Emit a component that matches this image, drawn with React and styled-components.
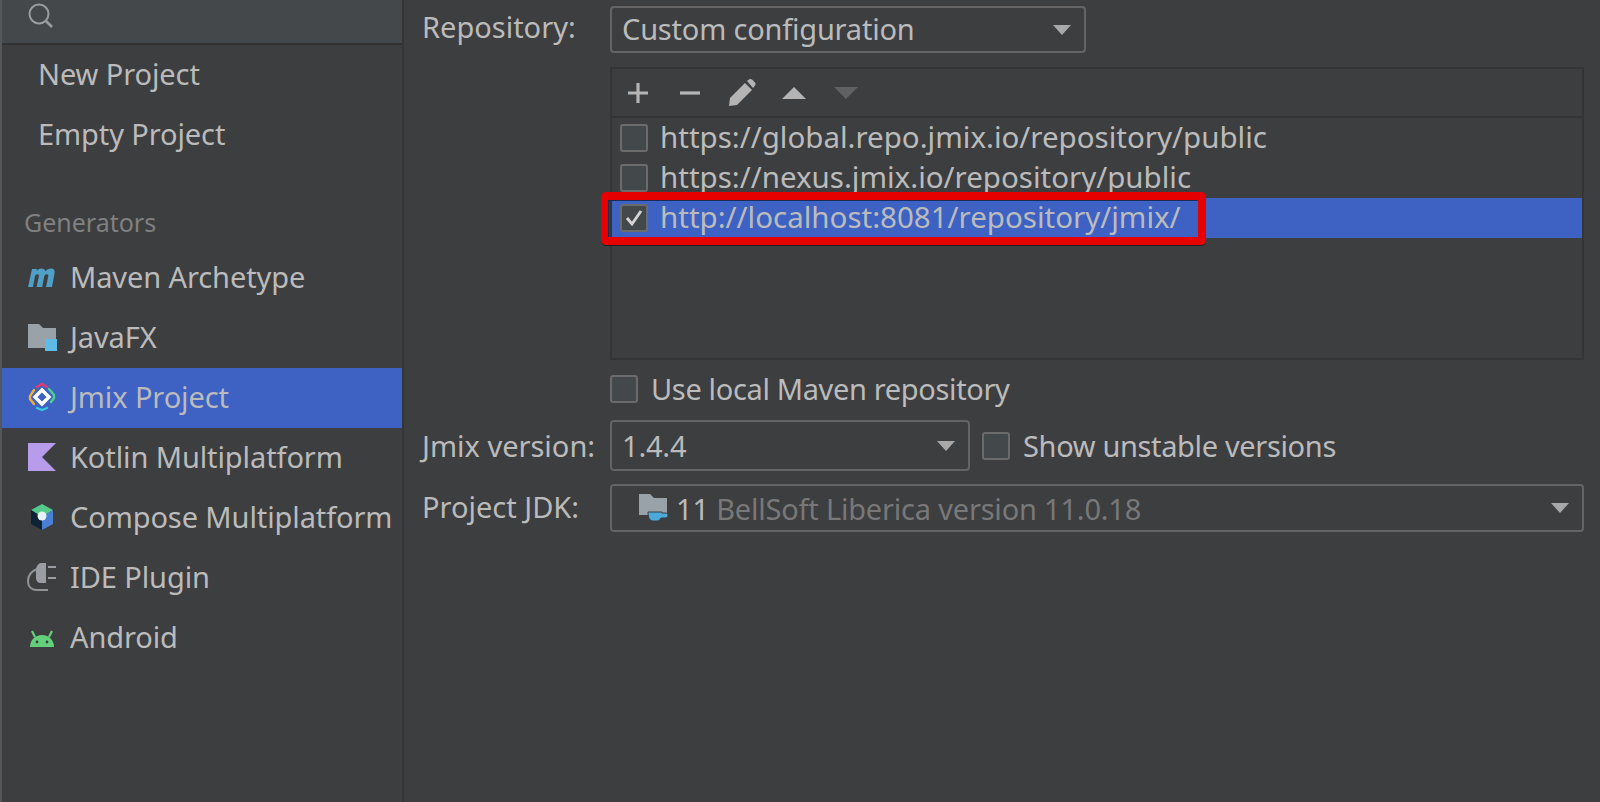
import React from 'react';
import styled, { createGlobalStyle } from 'styled-components';

const GlobalStyle = createGlobalStyle`
  html, body {
    margin: 0;
    height: 100%;
    background: #3d3e40;
  }
  #root {
    height: 100%;
  }
`;

const Page = styled.div`
  display: flex;
  height: 802px;
  overflow: hidden;
  background: #3d3e40;
  border-left: 2px solid #55585a;
  box-sizing: border-box;
  color: #bbbbbb;
  font-family: "Noto Sans", "Open Sans", sans-serif;
  font-size: 29px;
`;

const Sidebar = styled.aside`
  flex-shrink: 0;
  box-sizing: border-box;
  width: 402px;
  border-right: 2px solid #333537;
`;

const SearchBar = styled.div`
  display: flex;
  align-items: flex-start;
  height: 45px;
  padding: 3px 0 0 26px;
  box-sizing: border-box;
  background: #45484a;
  border-bottom: 2px solid #323232;
`;

const SideRow = styled.div`
  display: flex;
  align-items: center;
  gap: 13px;
  box-sizing: border-box;
  height: 60px;
  padding-bottom: 3px;
  padding-left: ${({ $inset }) => $inset || 25}px;
  background: ${({ $selected }) => ($selected ? '#3d62c3' : 'transparent')};
  letter-spacing: -0.1px;
  white-space: nowrap;
`;

const TopRows = styled.div`
  margin-bottom: 39px;
`;

const GroupTitle = styled.div`
  height: 44px;
  padding-left: 22px;
  font-size: 25px;
  line-height: 36px;
  color: #808080;
`;

const IconBox = styled.span`
  display: flex;
  flex-shrink: 0;
  width: 30px;
  height: 30px;
`;

const Main = styled.main`
  flex: 1;
  padding: 6px 16px 0 18px;
  min-width: 0;
`;

const FormRow = styled.div`
  display: grid;
  grid-template-columns: 188px 1fr;
  align-items: center;
  margin-bottom: ${({ $gap }) => $gap || 0}px;
`;

const Label = styled.label`
  white-space: nowrap;
  padding-bottom: ${({ $lift }) => $lift || 0}px;
`;

const Combo = styled.div`
  display: flex;
  align-items: center;
  justify-content: space-between;
  box-sizing: border-box;
  width: ${({ $width }) => ($width ? `${$width}px` : '100%')};
  height: ${({ $height }) => $height || 47}px;
  padding: 0 13px 0 10px;
  border: 2px solid #646464;
  border-radius: 4px;
  letter-spacing: -0.2px;
`;

const ComboValue = styled.span`
  display: flex;
  align-items: center;
  gap: 8px;
  margin-left: ${({ $inset }) => $inset || 0}px;
  padding-bottom: ${({ $lift }) => $lift || 0}px;
  white-space: nowrap;
`;

const Muted = styled.span`
  color: #787878;
`;

const Arrow = styled.span`
  width: 0;
  height: 0;
  border-left: 9px solid transparent;
  border-right: 9px solid transparent;
  border-top: 10px solid #a8a8a8;
`;

const Table = styled.div`
  box-sizing: border-box;
  height: 293px;
  border: 2px solid #333537;
`;

const Toolbar = styled.div`
  display: flex;
  align-items: center;
  height: 49px;
  border-bottom: 2px solid #333537;
  box-sizing: border-box;
`;

const ToolButton = styled.span`
  display: flex;
  align-items: center;
  justify-content: center;
  width: 52px;
  height: 100%;
`;

const RepoRow = styled.div`
  position: relative;
  display: flex;
  align-items: center;
  gap: 12px;
  box-sizing: border-box;
  height: 40px;
  padding-left: 8px;
  background: ${({ $selected }) => ($selected ? '#3d62c3' : 'transparent')};
  font-size: 29.5px;
  white-space: nowrap;
`;

const RepoUrl = styled.span`
  position: relative;
  top: -2px;
`;

const Checkbox = styled.span`
  display: flex;
  align-items: center;
  justify-content: center;
  flex-shrink: 0;
  box-sizing: border-box;
  width: 28px;
  height: 28px;
  background: #43494a;
  border: 2px solid #6b6b6b;
  border-radius: 3px;
`;

const CheckLine = styled.div`
  display: flex;
  align-items: center;
  gap: 13px;
  letter-spacing: -0.35px;
  white-space: nowrap;
`;

const VersionLine = styled.div`
  display: flex;
  align-items: center;
  gap: 12px;
`;

const Highlight = styled.div`
  position: absolute;
  left: -11px;
  top: -6px;
  width: 605px;
  height: 53px;
  box-sizing: border-box;
  border: 8px solid #e60000;
  border-left-width: 7px;
  border-radius: 5px;
  box-shadow: inset 1px 1px 0 #1c2b55, 0 1px 0 #1f1f1f;
  pointer-events: none;
`;

const SearchIcon = () => (
  <svg width="26" height="26" viewBox="0 0 26 26" fill="none" stroke="#9a9d9f" strokeWidth="2">
    <circle cx="11" cy="11" r="9.5" />
    <path d="M18 18l6 6" strokeWidth="2.6" />
  </svg>
);

const MavenIcon = () => (
  <svg width="32" height="30" viewBox="0 0 30 30">
    <path d="M1 25L5 7h5l-.4 2c1.600-1.600 3.200-2.400 5-2.400 2 0 3.200.9 3.700 2.600 1.700-1.700 3.500-2.600 5.400-2.600 3 0 4.400 1.900 3.800 5L25 25h-6l2.200-10.500c.3-1.500-.1-2.300-1.200-2.300-.9 0-1.800.5-2.600 1.300L15.200 25H9.600l2.200-10.500c.3-1.500-.1-2.300-1.200-2.300-.9 0-1.800.5-2.500 1.200L5.900 25z" fill="#4f9fc7" />
  </svg>
);

const FolderIcon = () => (
  <svg width="30" height="30" viewBox="0 0 30 30">
    <path d="M1 2h11l4 4h13v15H18v5H1z" fill="#9aa2a9" />
    <rect x="18" y="17" width="12" height="12" fill="#5dbbe6" />
  </svg>
);

const JmixIcon = () => (
  <svg width="30" height="30" viewBox="0 0 30 30" fill="none" strokeWidth="2.4" strokeLinecap="round">
    <path d="M10 5l5-3 5 3" stroke="#e23a6e" />
    <path d="M22 7l5 6v3l-3 4" stroke="#4fd08a" />
    <path d="M10 26l5 2 5-2" stroke="#38c6dc" />
    <path d="M7 8l-4 6v3l4 5" stroke="#f0b03c" />
    <path d="M15 8l7 7-7 7-7-7z" fill="#3d62c3" stroke="#ffffff" strokeWidth="3.4" strokeLinecap="butt" />
  </svg>
);

const KotlinIcon = () => (
  <svg width="30" height="30" viewBox="0 0 30 30">
    <path d="M1 1h28L15 15l14 14H1z" fill="#b79cec" />
  </svg>
);

const ComposeIcon = () => (
  <svg width="30" height="30" viewBox="0 0 30 30">
    <path d="M15 2l11 6-11 7-11-7z" fill="#55c98a" />
    <path d="M4 8l11 7v13L4 22z" fill="#0d2436" />
    <path d="M26 8L15 15v13l11-6z" fill="#4a80d4" />
    <circle cx="15" cy="14" r="4.500" fill="#e8f2f4" />
  </svg>
);

const PluginIcon = () => (
  <svg width="30" height="30" viewBox="0 0 30 30" fill="none">
    <path d="M10 7C5 9 1 12 1 19c0 6 4 9 9 9h11" stroke="#8f9396" strokeWidth="2" />
    <path d="M9 8c0-3 2-7 5-7h5v20h-5c-3 0-5-2-5-5z" fill="#9a9ea2" />
    <path d="M21 5h8M21 16h8" stroke="#9a9ea2" strokeWidth="2.200" />
  </svg>
);

const AndroidIcon = () => (
  <svg width="30" height="30" viewBox="0 0 30 30">
    <path d="M3 25c0-7 5-12 12-12s12 5 12 12z" fill="#63d07c" />
    <path d="M8 15L5 9M22 15l3-6" stroke="#63d07c" strokeWidth="2.200" />
    <circle cx="10" cy="20" r="1.400" fill="#3d3e40" />
    <circle cx="20" cy="20" r="1.400" fill="#3d3e40" />
  </svg>
);

const JdkIcon = () => (
  <svg width="30" height="30" viewBox="0 0 30 30">
    <path d="M1 1h11l4 4h13v17H1z" fill="#9aa2a9" />
    <path d="M10 19h14v1h3c2 0 3 1 3 2.500S29 25 27 25h-4c-1 2-2 3-4 3h-4c-3 0-5-3-5-9z" fill="#4ca9dc" stroke="#3d3e40" strokeWidth="1" />
  </svg>
);

const CheckMark = () => (
  <svg width="20" height="20" viewBox="0 0 20 20" fill="none" stroke="#d6d6d6" strokeWidth="2.800">
    <path d="M3 10l5 6 9-13" />
  </svg>
);

const PlusIcon = () => (
  <svg width="24" height="24" viewBox="0 0 24 24" stroke="#b4b4b4" strokeWidth="3.200">
    <path d="M12 2v20M2 12h20" />
  </svg>
);

const MinusIcon = () => (
  <svg width="24" height="24" viewBox="0 0 24 24" stroke="#b4b4b4" strokeWidth="3.200">
    <path d="M2 12h20" />
  </svg>
);

const PencilIcon = () => (
  <svg width="28" height="28" viewBox="0 0 28 28" fill="#b4b4b4">
    <path d="M1 27l1-8L17 4l7 7L9 26z" />
    <path d="M19 2l2-1.500c1-.7 2-.7 3 0l3 3c.7 1 .7 2 0 3L25 9z" />
  </svg>
);

const TriangleIcon = ({ down }) => (
  <svg width="26" height="14" viewBox="0 0 26 14" fill={down ? '#5f6163' : '#b4b4b4'}>
    <path d={down ? 'M1 1h24L13 13z' : 'M13 1l12 12H1z'} />
  </svg>
);

const generators = [
  { name: 'Maven Archetype', Icon: MavenIcon },
  { name: 'JavaFX', Icon: FolderIcon },
  { name: 'Jmix Project', Icon: JmixIcon, selected: true },
  { name: 'Kotlin Multiplatform', Icon: KotlinIcon },
  { name: 'Compose Multiplatform', Icon: ComposeIcon },
  { name: 'IDE Plugin', Icon: PluginIcon },
  { name: 'Android', Icon: AndroidIcon },
];

const App = () => (
  <Page>
    <GlobalStyle />
    <Sidebar>
      <SearchBar>
        <SearchIcon />
      </SearchBar>
      <TopRows>
        <SideRow $inset={36}>New Project</SideRow>
        <SideRow $inset={36}>Empty Project</SideRow>
      </TopRows>
      <GroupTitle>Generators</GroupTitle>
      {generators.map(({ name, Icon, selected }) => (
        <SideRow key={name} $selected={selected}>
          <IconBox>
            <Icon />
          </IconBox>
          {name}
        </SideRow>
      ))}
    </Sidebar>
    <Main>
      <FormRow $gap={14}>
        <Label $lift={6}>Repository:</Label>
        <Combo $width={476}>
          <ComboValue $lift={3}>Custom configuration</ComboValue>
          <Arrow />
        </Combo>
      </FormRow>
      <FormRow $gap={9}>
        <span />
        <Table>
          <Toolbar>
            <ToolButton><PlusIcon /></ToolButton>
            <ToolButton><MinusIcon /></ToolButton>
            <ToolButton><PencilIcon /></ToolButton>
            <ToolButton><TriangleIcon /></ToolButton>
            <ToolButton><TriangleIcon down /></ToolButton>
          </Toolbar>
          <RepoRow>
            <Checkbox />
            <RepoUrl>https://global.repo.jmix.io/repository/public</RepoUrl>
          </RepoRow>
          <RepoRow>
            <Checkbox />
            <RepoUrl>https://nexus.jmix.io/repository/public</RepoUrl>
          </RepoRow>
          <RepoRow $selected>
            <Checkbox>
              <CheckMark />
            </Checkbox>
            <RepoUrl>http://localhost:8081/repository/jmix/</RepoUrl>
            <Highlight />
          </RepoRow>
        </Table>
      </FormRow>
      <FormRow $gap={12}>
        <span />
        <CheckLine>
          <Checkbox />
          Use local Maven repository
        </CheckLine>
      </FormRow>
      <FormRow $gap={13}>
        <Label>Jmix version:</Label>
        <VersionLine>
          <Combo $width={360} $height={51}>
            <ComboValue>1.4.4</ComboValue>
            <Arrow />
          </Combo>
          <CheckLine>
            <Checkbox />
            Show unstable versions
          </CheckLine>
        </VersionLine>
      </FormRow>
      <FormRow>
        <Label $lift={4}>Project JDK:</Label>
        <Combo $height={48}>
          <ComboValue $inset={16}>
            <JdkIcon />
            <span>
              11 <Muted>BellSoft Liberica version 11.0.18</Muted>
            </span>
          </ComboValue>
          <Arrow />
        </Combo>
      </FormRow>
    </Main>
  </Page>
);

export default App;
